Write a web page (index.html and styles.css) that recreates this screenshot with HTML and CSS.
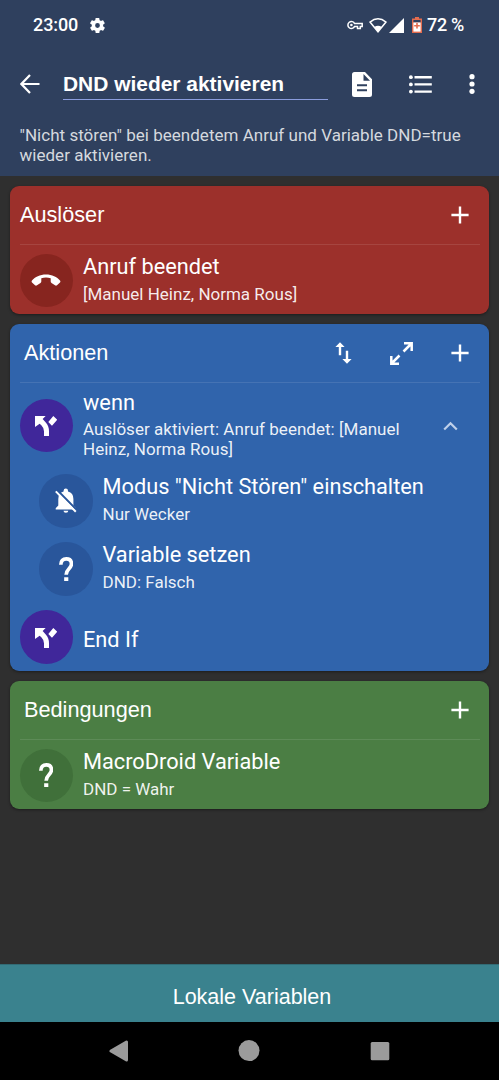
FILE: index.html
```html
<!DOCTYPE html>
<html lang="de">
<head>
<meta charset="utf-8">
<title>DND wieder aktivieren</title>
<link rel="stylesheet" href="styles.css">
</head>
<body>
<svg class="defs" width="0" height="0">
  <symbol id="plus" viewBox="0 0 18 18"><path d="M9 .4v17.2M.4 9h17.2" stroke="#fff" stroke-width="2.400"/></symbol>
  <symbol id="branch" viewBox="0 0 67 61"><path d="M55 0l12 11-16 18-11-11zM0 0h32l-9 9 10 11q9 10 9 25v16H27V46q0-10-8-18l-5-5L0 33z"/></symbol>
  <symbol id="question" viewBox="0 0 43 73"><path d="M5.500 23C5.500 12 12 5.500 22 5.500s15.500 6 15.500 15.500c0 14-16 15-16 32" fill="none" stroke="#fff" stroke-width="11"/><path d="M15.500 61h12.500v12H15.500z"/></symbol>
</svg>
<header class="header">
  <div class="status">
    <span class="clock">23:00</span>
    <svg class="gear" viewBox="2 2 20 20"><path fill-rule="evenodd" d="M19.4 13c0-.3.1-.6.1-1s0-.7-.1-1l2.100-1.600c.2-.2.2-.4.1-.6l-2-3.500c-.1-.2-.4-.3-.6-.2l-2.500 1c-.5-.4-1.100-.7-1.700-1l-.4-2.600c0-.3-.2-.5-.5-.5h-4c-.3 0-.5.2-.5.5L9 5.100c-.6.3-1.200.6-1.700 1l-2.500-1c-.2-.1-.5 0-.6.2l-2 3.500c-.1.2-.1.500.1.600L4.500 11c0 .3-.1.600-.1 1s0 .7.1 1l-2.100 1.600c-.2.200-.2.400-.1.600l2 3.500c.1.200.4.300.6.200l2.500-1c.5.400 1.100.700 1.700 1l.4 2.600c0 .300.2.500.5.500h4c.3 0 .5-.2.500-.5l.4-2.600c.6-.3 1.200-.6 1.700-1l2.500 1c.2.100.5 0 .6-.2l2-3.500c.1-.2.100-.5-.1-.6zM12 15.200a3.200 3.200 0 1 1 0-6.400 3.200 3.200 0 0 1 0 6.400z"/></svg>
    <div class="status-icons">
      <svg class="key" viewBox="0 0 16 10"><path fill="none" stroke="#fff" stroke-width="1.500" d="M7.600 3.600A3.500 3.500 0 1 0 7.600 6.400H10.500V8.500H13.300V6.400H15.200V3.600z"/><circle cx="4.400" cy="5" r="1.300"/></svg>
      <svg class="wifi" viewBox="0 0 18 15"><path d="M1 4.100Q9-2.500 17 4.100L9 13.800z" fill="none" stroke="#fff" stroke-width="1.500"/><path d="M5.300 9Q9 6.500 12.700 9L9 14z"/></svg>
      <svg class="signal" viewBox="0 0 15 15"><path d="M15 0v15H0z"/></svg>
      <svg class="battery" viewBox="0 0 10 16"><path fill="#e46c4e" d="M3 0h4v1.500h3V16H0V1.500h3z"/><path fill="#2f405e" d="M1.400 3h7.200v2.500H1.400z"/><path d="M1.400 5.500h7.200v9.100H1.400z"/><path fill="#e46c4e" d="M4.200 6h1.600v1.900h2v1.600h-2v2H4.200v-2h-2V7.900h2z"/></svg>
      <span class="percent">72 %</span>
    </div>
  </div>
  <div class="toolbar">
    <svg class="back" viewBox="0 0 20 20"><path d="M19.500 10H1.800M10 1L1.400 10 10 19" fill="none" stroke="#fff" stroke-width="2.200"/></svg>
    <div class="name">DND wieder aktivieren</div>
    <svg class="doc" viewBox="0 0 20 25"><path fill-rule="evenodd" d="M2.500 0H13l7 7.200V22.500Q20 25 17.500 25h-15Q0 25 0 22.500v-20Q0 0 2.500 0zM11.500 2v6.800H18zM5 12.200v2h10v-2zM5 17.200v2h10v-2z"/></svg>
    <svg class="list" viewBox="0 0 23 19"><circle cx="1.900" cy="2.200" r="1.900"/><circle cx="1.900" cy="9.400" r="1.900"/><circle cx="1.900" cy="16.600" r="1.900"/><path d="M5.500 1h17.300v2.400H5.500zM5.500 8.200h17.300v2.400H5.500zM5.500 15.400h17.300v2.400H5.500z"/></svg>
    <svg class="more" viewBox="0 0 6 20"><circle cx="3" cy="2.700" r="2.600"/><circle cx="3" cy="10" r="2.600"/><circle cx="3" cy="17.300" r="2.600"/></svg>
  </div>
  <div class="description">"Nicht stören" bei beendetem Anruf und Variable DND=true wieder aktivieren.</div>
</header>
<main class="cards">
  <section class="card red">
    <div class="card-head"><h2>Auslöser</h2><svg class="plus"><use href="#plus"/></svg></div>
    <div class="row">
      <div class="disc"><svg class="phone" viewBox="0 0 30 12"><path d="M15 .6C21 .6 26 3 29 6.600q.8 1 0 2L26 11.300q-1 .8-2 0L20.500 9q-.8-.6-.8-1.500V4.300Q15 2.700 10.300 4.300V7.500q0 .900-.8 1.500L6 11.300q-1 .800-2 0L1 8.600q-.8-1 0-2C4 3 9 .6 15 .6z"/></svg></div>
      <div class="text"><div class="title">Anruf beendet</div><div class="sub">[Manuel Heinz, Norma Rous]</div></div>
    </div>
  </section>
  <section class="card blue">
    <div class="card-head inset"><h2>Aktionen</h2>
      <svg class="sort" viewBox="0 0 17 22"><path d="M5 .2l4.600 4.700H6.200v8.400H3.800V4.900H.4zM12 21.800l-4.600-4.700h3.400V8.700h2.400v8.400h3.400z"/></svg>
      <svg class="expand" viewBox="0 0 23 23"><path d="M14 1.300h7.700V9M21 2L13.500 9.500M1.300 14v7.700H9M2 21l7.500-7.500" fill="none" stroke="#fff" stroke-width="2.500"/></svg>
      <svg class="plus"><use href="#plus"/></svg></div>
    <div class="row wenn">
      <div class="disc purple"><svg class="branch"><use href="#branch"/></svg></div>
      <div class="text"><div class="title">wenn</div><div class="sub">Auslöser aktiviert: Anruf beendet: [Manuel Heinz, Norma Rous]</div></div>
      <svg class="chevron" viewBox="0 0 15 10"><path d="M1.200 8.500L7.500 2.200l6.300 6.300" fill="none" stroke="#bed0ea" stroke-width="2.200"/></svg>
    </div>
    <div class="row nested">
      <div class="disc"><svg class="bell" viewBox="0 0 22 25"><path d="M3.300 17.500V11Q3.300 5 8.600 3.600V2.700a2.200 2.200 0 0 1 4.400 0v.9Q18.400 5 18.400 11v6.500l2.600 2.800v1.200H.7v-1.200zM8.500 22.700h4.800a2.400 2 0 0 1-4.800 0z"/><path d="M2.300 2.300L22 22.300" stroke="#29569b" stroke-width="2.200"/><path d="M.8 3.400L20.800 23.800" stroke="#fff" stroke-width="2"/></svg></div>
      <div class="text"><div class="title">Modus "Nicht Stören" einschalten</div><div class="sub">Nur Wecker</div></div>
    </div>
    <div class="row nested">
      <div class="disc"><svg class="question"><use href="#question"/></svg></div>
      <div class="text"><div class="title">Variable setzen</div><div class="sub">DND: Falsch</div></div>
    </div>
    <div class="row endif">
      <div class="disc purple"><svg class="branch"><use href="#branch"/></svg></div>
      <div class="title">End If</div>
    </div>
  </section>
  <section class="card green">
    <div class="card-head inset"><h2>Bedingungen</h2><svg class="plus"><use href="#plus"/></svg></div>
    <div class="row">
      <div class="disc"><svg class="question"><use href="#question"/></svg></div>
      <div class="text"><div class="title">MacroDroid Variable</div><div class="sub">DND = Wahr</div></div>
    </div>
  </section>
</main>
<div class="locals">Lokale Variablen</div>
<nav class="nav">
  <svg viewBox="0 0 22 22"><path d="M3 11L18.500 2v18z" stroke="#9b9b9b" stroke-width="3" stroke-linejoin="round"/></svg>
  <svg viewBox="0 0 22 22"><circle cx="11" cy="10.600" r="10.500"/></svg>
  <svg viewBox="0 0 22 22"><rect x="1.700" y="2" width="18.600" height="18.200" rx="1.500"/></svg>
</nav>
</body>
</html>
```
FILE: styles.css
```css
* { box-sizing: border-box; }
body {
  margin: 0;
  height: 1080px;
  display: flex;
  flex-direction: column;
  overflow: hidden;
  background: #2f2f2f;
  color: #fff;
  font-family: Roboto, sans-serif;
}
svg { display: block; flex: none; fill: #fff; }
.defs { position: absolute; }

.header { height: 176px; background: #2f405e; flex: none; }
.status { height: 50px; display: flex; align-items: center; padding: 0 35px 0 33px; }
.clock, .percent { font-size: 18px; font-weight: 500; line-height: 22px; }
.clock { width: 57px; letter-spacing: -.1px; }
.percent { letter-spacing: -.3px; }
.gear { width: 15px; height: 15px; }
.status-icons { display: flex; align-items: center; margin-left: auto; }
.key { width: 16px; height: 10px; margin-right: 6px; }
.wifi { width: 18px; height: 15px; margin-right: 2px; }
.signal { width: 15px; height: 15px; margin-right: 8px; }
.battery { width: 10px; height: 16px; margin-right: 5px; }

.toolbar { height: 68px; display: flex; align-items: center; padding: 0 24px 0 19.500px; }
.back { width: 20px; height: 20px; }
.name {
  width: 265px;
  height: 32px;
  margin: 0 24px 0 23.500px;
  border-bottom: 1px solid #8b9ddd;
  font: bold 20.950px/32px "Liberation Sans", sans-serif;
}
.doc { width: 20px; height: 25px; }
.list { width: 23px; height: 19px; margin-left: 37px; }
.more { width: 6px; height: 20px; margin-left: auto; }
.description { padding: 7px 0 0 19.500px; width: 480px; font-size: 17px; line-height: 20px; letter-spacing: .02px; color: #d5d9df; }

.cards { padding: 9.500px 10px 0; display: flex; flex-direction: column; gap: 10px; flex: 1; }
.card { border-radius: 9px; padding: 0 9.500px; box-shadow: 0 1px 3px rgba(0,0,0,.4); }
.red { background: #9c302b; height: 128.500px; }
.blue { background: #3064ac; height: 346.500px; }
.green { background: #4b7e44; height: 128px; }
.card-head {
  height: 59px;
  display: flex;
  align-items: center;
  border-bottom: 1px solid rgba(255,255,255,.1);
  padding: 1px 10.500px 0 .5px;
}
.card-head.inset { padding-left: 4.500px; }
.blue .card-head { height: 58.500px; }
h2 { margin: 0 auto 0 0; font: 400 21.700px/28px "Liberation Sans", sans-serif; }
.plus { width: 18px; height: 18px; }
.sort { width: 17px; height: 22px; margin-right: 38px; }
.expand { width: 23px; height: 23px; margin-right: 38px; }

.row { display: flex; padding-top: 9px; gap: 10px; }
.disc {
  width: 53.500px;
  height: 53.500px;
  flex: none;
  border-radius: 50%;
  display: flex;
  align-items: center;
  justify-content: center;
  background: #29569b;
}
.red .disc { background: #87251f; }
.green .disc { background: #40703a; }
.blue .purple { background: #40279a; }
.title { font-size: 21.750px; line-height: 26px; white-space: nowrap; }
.sub { margin-top: 4px; font-size: 17px; line-height: 20px; color: rgba(255,255,255,.92); }
.phone { width: 30px; height: 12px; margin-bottom: 1px; }
.branch { width: 22.300px; height: 20.300px; margin-top: 2px; }
.question { width: 14.300px; height: 24.300px; }
.bell { width: 22px; height: 25px; }

.wenn { height: 82.500px; padding-top: 7.500px; }
.wenn .disc { margin-top: 8.500px; }
.wenn .text { width: 334px; }
.wenn .sub { margin-top: 3px; letter-spacing: .03px; }
.chevron { width: 15px; height: 10px; margin: 31px 0 0 16px; }
.nested { height: 68px; padding-left: 19.500px; }
.endif .title { margin-top: 17px; }

.locals {
  height: 58px;
  flex: none;
  background: #3a828e;
  border-top: 1px solid #326b75;
  text-align: center;
  font: 21.500px/65px "Liberation Sans", sans-serif;
  padding-left: 5px;
}
.nav { height: 58px; flex: none; background: #000; display: flex; justify-content: center; align-items: center; gap: 108.500px; padding-right: 1px; }
.nav svg { width: 22px; height: 22px; fill: #9b9b9b; }
```
